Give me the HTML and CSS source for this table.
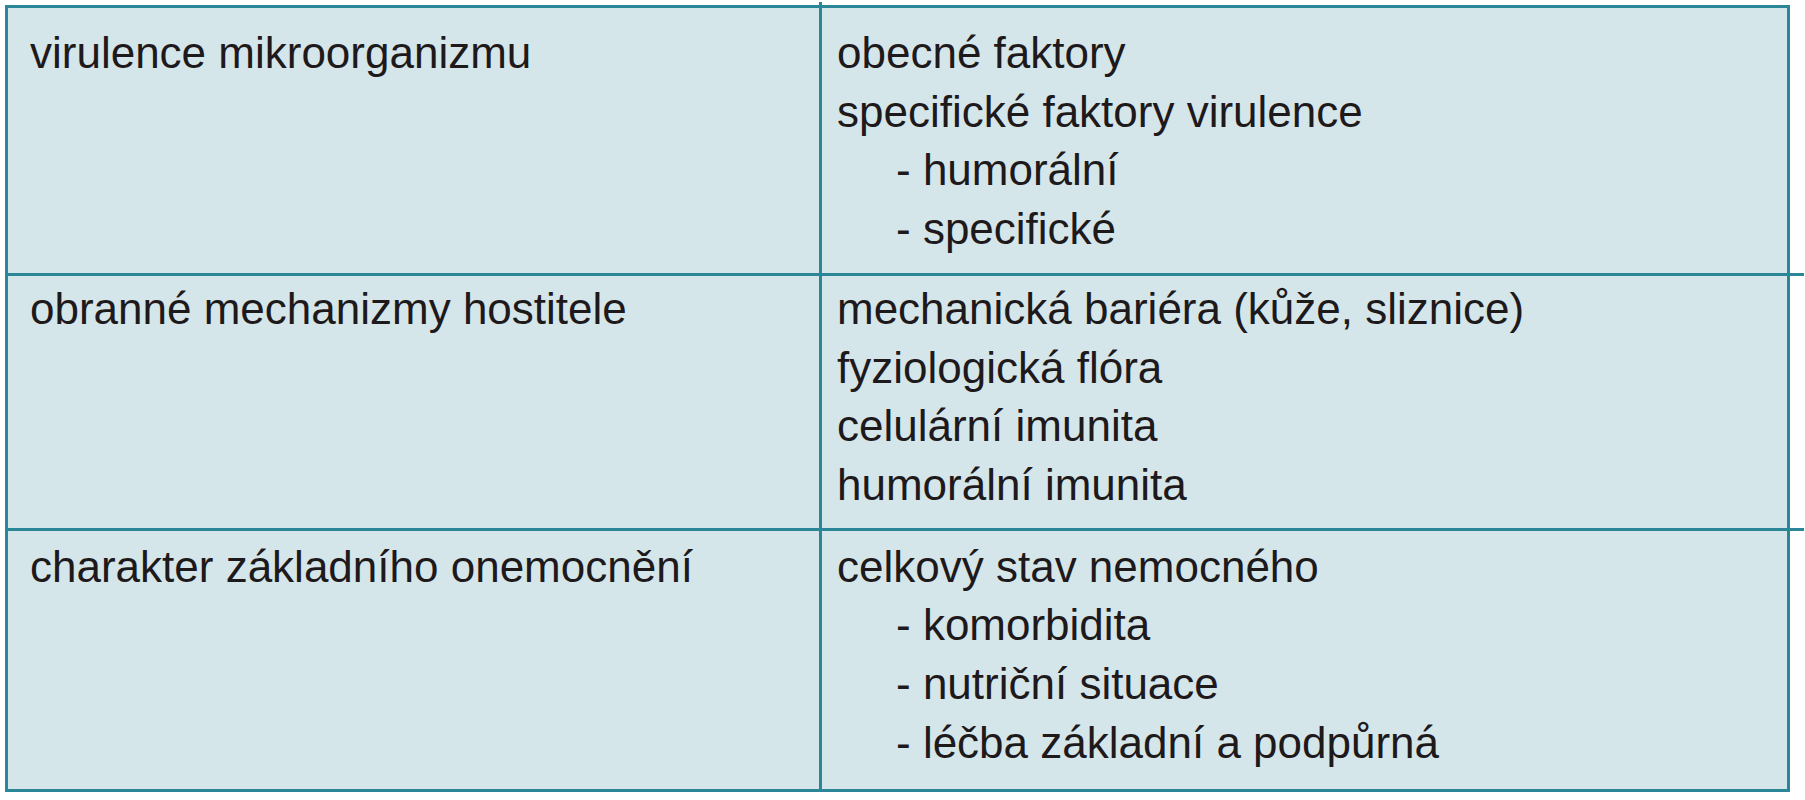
FILE: index.html
```html
<!DOCTYPE html>
<html lang="cs">
<head>
<meta charset="utf-8">
<title>Faktory infekce</title>
<link rel="stylesheet" href="styles.css">
</head>
<body>
<div class="table">
  <div class="row row-1">
    <div class="cell cell-name"><div class="line">virulence mikroorganizmu</div></div>
    <div class="cell cell-list">
      <div class="line">obecné faktory</div>
      <div class="line">specifické faktory virulence</div>
      <div class="line sub">- humorální</div>
      <div class="line sub">- specifické</div>
    </div>
  </div>
  <div class="row row-2">
    <div class="cell cell-name"><div class="line">obranné mechanizmy hostitele</div></div>
    <div class="cell cell-list">
      <div class="line">mechanická bariéra (kůže, sliznice)</div>
      <div class="line">fyziologická flóra</div>
      <div class="line">celulární imunita</div>
      <div class="line">humorální imunita</div>
    </div>
  </div>
  <div class="row row-3">
    <div class="cell cell-name"><div class="line">charakter základního onemocnění</div></div>
    <div class="cell cell-list">
      <div class="line">celkový stav nemocného</div>
      <div class="line sub">- komorbidita</div>
      <div class="line sub">- nutriční situace</div>
      <div class="line sub">- léčba základní a podpůrná</div>
    </div>
  </div>
</div>
</body>
</html>
```
FILE: styles.css
```css
html, body {
  margin: 0;
  padding: 0;
  background: #ffffff;
}

body {
  font-family: "Liberation Sans", Arial, sans-serif;
  color: #1e191b;
}

.table {
  margin: 5px 0 0 5px;
  width: 1785px;
  box-sizing: border-box;
  border: 3px solid #2b8797;
  background: #d5e6ea;
  display: flex;
  flex-direction: column;
  position: relative;
}

.row {
  display: grid;
  grid-template-columns: 814px 1fr;
  position: relative;
}

.row + .row {
  border-top: 3px solid #2b8797;
}

.row + .row::after {
  content: "";
  position: absolute;
  top: -3px;
  right: -17px;
  width: 14px;
  height: 3px;
  background: #2b8797;
}

.cell-name {
  border-right: 3px solid #2b8797;
  padding-left: 22px;
  position: relative;
}

.row-1 .cell-name::before {
  content: "";
  position: absolute;
  right: -3px;
  top: -6px;
  width: 3px;
  height: 3px;
  background: #2b8797;
}

.row-3 .cell-name::after {
  content: "";
  position: absolute;
  right: -3px;
  bottom: -6px;
  width: 3px;
  height: 3px;
  background: #2b8797;
}

.cell-list {
  padding-left: 15px;
}

.line {
  font-size: 44px;
  line-height: 58.7px;
  white-space: nowrap;
}

.sub {
  padding-left: 59px;
}

.row-1 .cell {
  padding-top: 16px;
  padding-bottom: 14px;
}

.row-2 .cell {
  padding-top: 4px;
  padding-bottom: 13px;
}

.row-3 .cell {
  padding-top: 7px;
  padding-bottom: 17px;
}
```
